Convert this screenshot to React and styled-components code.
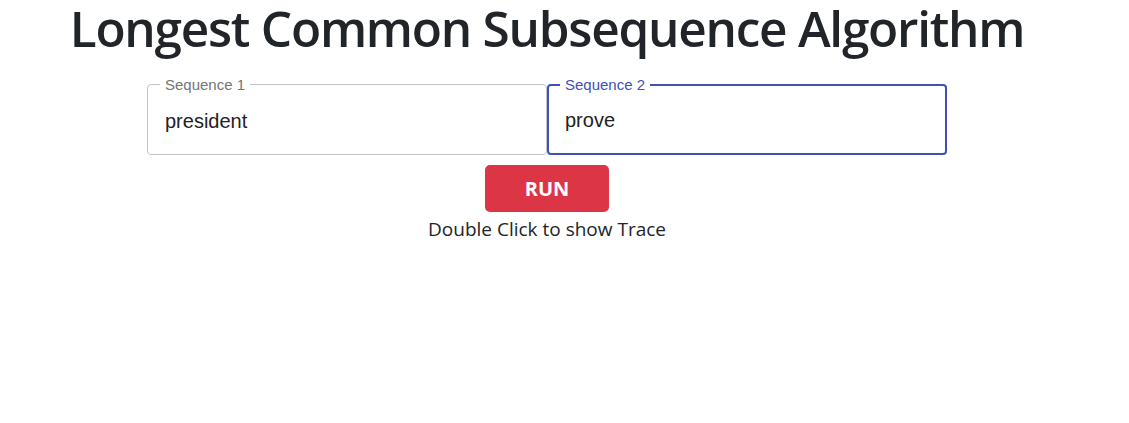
import React, { useState } from "react";
import styled, { createGlobalStyle } from "styled-components";

const GlobalStyle = createGlobalStyle`
  html, body {
    margin: 0;
    padding: 0;
    background: #fff;
  }
  body {
    font-family: "Open Sans", "Noto Sans", sans-serif;
    color: #212529;
  }
`;

const Page = styled.div`
  width: 1094px;
  display: flex;
  flex-direction: column;
  align-items: center;
`;

const Title = styled.h1`
  margin: 0;
  font-size: 49.5px;
  font-weight: 600;
  line-height: 56px;
  letter-spacing: -1.25px;
  white-space: nowrap;
  color: #212529;
`;

const FieldRow = styled.div`
  display: flex;
  margin-top: 21px;
`;

const Fieldset = styled.fieldset`
  width: 400px;
  height: 78px;
  box-sizing: border-box;
  margin: 0;
  padding: 0 ${(p) => (p.$focused ? "11px" : "12px")};
  border: ${(p) => (p.$focused ? "2px solid #3f51b5" : "1px solid #c4c4c4")};
  border-radius: 4px;
  font-family: "Liberation Sans", Arial, sans-serif;
`;

const Legend = styled.legend`
  padding: 0 5px;
  font-size: 15px;
  line-height: 15px;
  color: ${(p) => (p.$focused ? "#3f51b5" : "#757575")};
`;

const Input = styled.input`
  display: block;
  width: 100%;
  box-sizing: border-box;
  margin-top: ${(p) => (p.$focused ? "16px" : "17px")};
  padding: 0 0 0 5px;
  border: none;
  outline: none;
  background: transparent;
  font-family: "Liberation Sans", Arial, sans-serif;
  font-size: 20px;
  line-height: 24px;
  color: #222;
  caret-color: #000;
`;

const RunButton = styled.button`
  margin-top: 10px;
  width: 124px;
  height: 47px;
  border: none;
  border-radius: 5px;
  background: #dc3545;
  color: #fff;
  font-family: "Open Sans", "Noto Sans", sans-serif;
  font-size: 20px;
  font-weight: 700;
  cursor: pointer;
`;

const Hint = styled.div`
  margin-top: 3px;
  font-size: 19px;
  line-height: 28px;
  color: #212529;
`;

function SequenceField({ label, value, onChange, focused }) {
  return (
    <Fieldset $focused={focused}>
      <Legend $focused={focused}>{label}</Legend>
      <Input
        $focused={focused}
        value={value}
        onChange={(e) => onChange(e.target.value)}
        autoFocus={focused}
      />
    </Fieldset>
  );
}

export default function App() {
  const [seq1, setSeq1] = useState("president");
  const [seq2, setSeq2] = useState("prove");

  return (
    <Page>
      <GlobalStyle />
      <Title>Longest Common Subsequence Algorithm</Title>
      <FieldRow>
        <SequenceField label="Sequence 1" value={seq1} onChange={setSeq1} />
        <SequenceField
          label="Sequence 2"
          value={seq2}
          onChange={setSeq2}
          focused
        />
      </FieldRow>
      <RunButton>RUN</RunButton>
      <Hint>Double Click to show Trace</Hint>
    </Page>
  );
}
